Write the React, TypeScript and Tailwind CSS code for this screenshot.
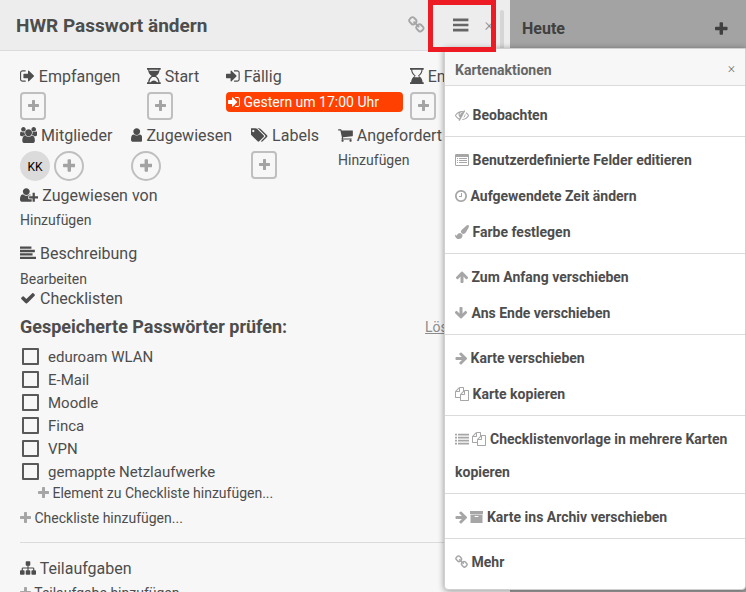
import type { ReactNode } from "react";

const ARROW =
  "M1600 960q0 54-37 91l-651 651q-39 37-91 37-51 0-90-37l-75-75q-38-38-38-91t38-91l293-293h-704q-52 0-84.5-37.5t-32.5-90.5v-128q0-53 32.5-90.5t84.5-37.5h704l-293-294q-38-36-38-90t38-90l75-75q38-38 90-38 53 0 91 38l651 651q37 35 37 90z";

// Each glyph: [left edge, width, path, optional transform] on a 1792 unit high grid.
const GLYPHS: Record<string, [number, number, string, string?]> = {
  plus: [192, 1408, "M1600 736v192q0 40-28 68t-68 28h-416v416q0 40-28 68t-68 28h-192q-40 0-68-28t-28-68v-416h-416q-40 0-68-28t-28-68v-192q0-40 28-68t68-28h416v-416q0-40 28-68t68-28h192q40 0 68 28t28 68v416h416q40 0 68 28t28 68z"],
  signOut: [64, 1664, "M704 1440q0 4 1 20t.5 26.5-3 23.5-10 19.5-20.5 6.5h-320q-119 0-203.5-84.5t-84.5-203.5v-704q0-119 84.5-203.5t203.5-84.5h320q13 0 22.5 9.5t9.5 22.5q0 4 1 20t.5 26.5-3 23.5-10 19.5-20.5 6.5h-320q-66 0-113 47t-47 113v704q0 66 47 113t113 47h312l11.5 1 11.5 3 8 5.5 7 9 2 13.5zm928-544q0 26-19 45l-544 544q-19 19-45 19t-45-19-19-45v-288h-448q-26 0-45-19t-19-45v-384q0-26 19-45t45-19h448v-288q0-26 19-45t45-19 45 19l544 544q19 19 19 45z"],
  signIn: [128, 1536, "M1312 896q0 26-19 45l-544 544q-19 19-45 19t-45-19-19-45v-288h-448q-26 0-45-19t-19-45v-384q0-26 19-45t45-19h448v-288q0-26 19-45t45-19 45 19l544 544q19 19 19 45zm352-352v704q0 119-84.5 203.5t-203.5 84.5h-320q-13 0-22.5-9.5t-9.5-22.5q0-4-1-20t-.5-26.5 3-23.5 10-19.5 20.5-6.5h320q66 0 113-47t47-113v-704q0-66-47-113t-113-47h-312l-11.5-1-11.5-3-8-5.5-7-9-2-13.5q0-4-1-20t-.5-26.5 3-23.5 10-19.5 20.5-6.5h320q119 0 203.5 84.5t84.5 203.5z"],
  link: [64, 1664, "M1520 1216q0-40-28-68l-208-208q-28-28-68-28-42 0-72 32 3 3 19 18.5t21.5 21.5 15 19 13 25.5 3.5 27.5q0 40-28 68t-68 28q-15 0-27.5-3.5t-25.5-13-19-15-21.5-21.5-18.5-19q-33 31-33 73 0 40 28 68l206 207q27 27 68 27 40 0 68-26l147-146q28-28 28-67zm-703-705q0-40-28-68l-206-207q-28-28-68-28-39 0-68 27l-147 146q-28 28-28 67 0 40 28 68l208 208q27 27 68 27 42 0 72-31-3-3-19-18.5t-21.5-21.5-15-19-13-25.5-3.5-27.5q0-40 28-68t68-28q15 0 27.5 3.5t25.5 13 19 15 21.5 21.5 18.5 19q33-31 33-73zm895 705q0 120-85 203l-147 146q-83 83-203 83-121 0-204-85l-206-207q-83-83-83-203 0-123 88-209l-88-88q-86 88-208 88-120 0-204-84l-208-208q-84-84-84-204t85-203l147-146q83-83 203-83 121 0 204 85l206 207q83 83 83 203 0 123-88 209l88 88q86-88 208-88 120 0 204 84l208 208q84 84 84 204z"],
  bars: [128, 1536, "M128 256h1536v256h-1536zM128 768h1536v256h-1536zM128 1280h1536v256h-1536z"],
  clock: [128, 1536, "M1024 544v448q0 14-9 23t-23 9h-320q-14 0-23-9t-9-23v-64q0-14 9-23t23-9h224v-352q0-14 9-23t23-9h64q14 0 23 9t9 23zm416 352q0-148-73-273t-198-198-273-73-273 73-198 198-73 273 73 273 198 198 273 73 273-73 198-198 73-273zm224 0q0 209-103 385.5t-279.5 279.5-385.5 103-385.5-103-279.5-279.5-103-385.5 103-385.5 279.5-279.5 385.5-103 385.5 103 279.5 279.5 103 385.5z"],
  arrowRight: [64, 1536, ARROW],
  arrowUp: [64, 1664, ARROW, "rotate(-90 896 896)"],
  arrowDown: [64, 1664, ARROW, "rotate(90 896 896)"],
  check: [0, 1792, "M1671 566q0 40-28 68l-724 724-136 136q-28 28-68 28t-68-28l-136-136-362-362q-28-28-28-68t28-68l136-136q28-28 68-28t68 28l294 295 656-657q28-28 68-28t68 28l136 136q28 28 28 68z"],
  user: [256, 1280, "M1536 1399q0 109-62.5 187t-150.5 78h-854q-88 0-150.5-78t-62.5-187q0-85 8.5-160.5t31.5-152 58.5-131 94-89 134.5-34.5q131 128 313 128t313-128q76 0 134.5 34.5t94 89 58.5 131 31.5 152 8.5 160.5zm-256-887q0 159-112.5 271.5t-271.5 112.5-271.5-112.5-112.5-271.5 112.5-271.5 271.5-112.5 271.5 112.5 112.5 271.5z"],
  users: [64, 1920, "M657 896q-162 5-265 128h-134q-82 0-138-40.5t-56-118.5q0-353 124-353 6 0 43.5 21t97.5 42.5 119 21.5q67 0 133-23-5 37-5 66 0 155 90 285zm1071 637q0 120-73 189.5t-194 69.5h-874q-121 0-194-69.5t-73-189.5q0-53 3.5-103.5t14-109 26.5-108.5 43-97.5 62-81 85.5-53.5 111.5-20q10 0 43 21.5t73 48 107 48 135 21.5 135-21.5 107-48 73-48 43-21.5q61 0 111.5 20t85.5 53.5 62 81 43 97.5 26.5 108.5 14 109 3.5 103.5zm-1024-1277q0 106-75 181t-181 75-181-75-75-181 75-181 181-75 181 75 75 181zm704 384q0 159-112.5 271.5t-271.5 112.5-271.5-112.5-112.5-271.5 112.5-271.5 271.5-112.5 271.5 112.5 112.5 271.5zm576 225q0 78-56 118.5t-138 40.5h-134q-103-123-265-128 90-130 90-285 0-29-5-66 66 23 133 23 59 0 119-21.5t97.5-42.5 43.5-21q124 0 124 353zm-128-609q0 106-75 181t-181 75-181-75-75-181 75-181 181-75 181 75 75 181z"],
  userPlus: [0, 2048, "M704 896q-159 0-271.5-112.5t-112.5-271.5 112.5-271.5 271.5-112.5 271.5 112.5 112.5 271.5-112.5 271.5-271.5 112.5zm960 128h352q13 0 22.5 9.5t9.5 22.5v192q0 13-9.5 22.5t-22.5 9.5h-352v352q0 13-9.5 22.5t-22.5 9.5h-192q-13 0-22.5-9.5t-9.5-22.5v-352h-352q-13 0-22.5-9.5t-9.5-22.5v-192q0-13 9.5-22.5t22.5-9.5h352v-352q0-13 9.5-22.5t22.5-9.5h192q13 0 22.5 9.5t9.5 22.5v352zm-736 224q0 52 38 90t90 38h256v238q-68 50-171 50h-874q-121 0-194-69t-73-190q0-53 3.5-103.5t14-109 26.5-108.5 43-97.5 62-81 85.5-53.5 111.5-20q19 0 39 17 79 61 154.5 91.5t164.5 30.5 164.5-30.5 154.5-91.5q20-17 39-17 132 0 217 96h-223q-52 0-90 38t-38 90v192z"],
  tags: [0, 1920, "M384 448q0-53-37.5-90.5t-90.5-37.5-90.5 37.5-37.5 90.5 37.5 90.5 90.5 37.5 90.5-37.5 37.5-90.5zm1067 576q0 53-37 90l-491 492q-39 37-91 37-53 0-90-37l-715-716q-38-37-64.5-101t-26.5-117v-416q0-52 38-90t90-38h416q53 0 117 26.5t102 64.5l715 714q37 39 37 91zm384 0q0 53-37 90l-491 492q-39 37-91 37-36 0-59-14t-53-45l470-470q37-37 37-90 0-52-37-91l-715-714q-38-38-102-64.5t-117-26.5h224q53 0 117 26.5t102 64.5l715 714q37 39 37 91z"],
  cart: [64, 1664, "M704 1536q0 52-38 90t-90 38-90-38-38-90 38-90 90-38 90 38 38 90zm896 0q0 52-38 90t-90 38-90-38-38-90 38-90 90-38 90 38 38 90zm128-1088v512q0 24-16.5 42.5t-40.5 21.5l-1044 122q13 60 13 70 0 16-24 64h920q26 0 45 19t19 45-19 45-45 19h-1024q-26 0-45-19t-19-45q0-11 8-31.5t16-36 21.5-40 15.5-29.5l-177-823h-204q-26 0-45-19t-19-45 19-45 45-19h256q16 0 28.5 6.5t19.5 15.5 13 24.5 8 26 5.5 29.5 4.5 26h1201q26 0 45 19t19 45z"],
  alignLeft: [0, 1792, "M0 160h1280v256h-1280zM0 544h1664v256h-1664zM0 928h1408v256h-1408zM0 1312h1792v256h-1792z"],
  sitemap: [0, 1792, "M1792 1248v320q0 40-28 68t-68 28h-320q-40 0-68-28t-28-68v-320q0-40 28-68t68-28h96v-192h-512v192h96q40 0 68 28t28 68v320q0 40-28 68t-68 28h-320q-40 0-68-28t-28-68v-320q0-40 28-68t68-28h96v-192h-512v192h96q40 0 68 28t28 68v320q0 40-28 68t-68 28h-320q-40 0-68-28t-28-68v-320q0-40 28-68t68-28h96v-192q0-52 38-90t90-38h512v-192h-96q-40 0-68-28t-28-68v-320q0-40 28-68t68-28h320q40 0 68 28t28 68v320q0 40-28 68t-68 28h-96v192h512q52 0 90 38t38 90v192h96q40 0 68 28t28 68z"],
  hourglassStart: [128, 1536, "M128 0h1536v192h-128q0 420-400 704 400 284 400 704h128v192h-1536v-192h128q0-420 400-704-400-284-400-704h-128zM384 192q0 64 12 120h1000q12-56 12-120zM1408 1600q0-360-330-600h-364q-330 240-330 600h152q120-190 360-190t360 190z"],
  hourglassEnd: [128, 1536, "M128 0h1536v192h-128q0 420-400 704 400 284 400 704h128v192h-1536v-192h128q0-420 400-704-400-284-400-704h-128zM384 192q0 380 370 640-15 60-60 120-20 30-60 90h524q-40-60-60-90-45-60-60-120 370-260 370-640z"],
  files: [0, 1792, "M1696 384q40 0 68 28t28 68v1216q0 40-28 68t-68 28h-960q-40 0-68-28t-28-68v-288h-544q-40 0-68-28t-28-68v-672q0-40 20-88t48-76l408-408q28-28 76-48t88-20h416q40 0 68 28t28 68v328q68-40 128-40h416zm-544 213l-299 299h299v-299zm-640-384l-299 299h299v-299zm196 647l316-316v-416h-384v416q0 40-28 68t-68 28h-416v640h512v-256q0-40 20-88t48-76zm956 804v-1152h-384v416q0 40-28 68t-68 28h-416v640h896z"],
  list: [0, 1792, "M0 224h256v224h-256zM0 608h256v224h-256zM0 992h256v224h-256zM0 1376h256v224h-256zM384 224h1408v224h-1408zM384 608h1408v224h-1408zM384 992h1408v224h-1408zM384 1376h1408v224h-1408z"],
  listAlt: [0, 1792, "M160 128h1472q160 0 160 160v1216q0 160-160 160h-1472q-160 0-160-160v-1216q0-160 160-160zM128 512v992q0 32 32 32h1472q32 0 32-32v-992zM256 640h128v128h-128zM512 640h1024v128h-1024zM256 896h128v128h-128zM512 896h1024v128h-1024zM256 1152h128v128h-128zM512 1152h1024v128h-1024z"],
  archive: [64, 1664, "M64 128h1664v384h-1664zM128 576h1536v1088h-1536zM704 768q-64 0-64 64t64 64h384q64 0 64-64t-64-64z"],
  brush: [0, 1792, "M1615 0q70 0 122.5 46.5t52.5 116.5q0 63-45 151-332 629-465 752-97 91-218 91-126 0-216.5-92.5t-90.5-219.5q0-128 92-212l638-579q59-54 130-54zm-909 1034q39 76 106.5 130t150.5 76l1 71q4 213-129.5 347t-348.5 134q-123 0-218-46.5t-152.5-127.5-86.5-183-29-220q7 5 41 30t62 44.5 59 36.5 46 17q41 0 55-37 25-66 57.5-112.5t69.5-76 88-47.5 103-25.5 125-10.5z"],
  eyeSlash: [0, 1792, "M555 1335l78-141q-87-63-136-159t-49-203q0-121 61-225-229 117-381 353 167 258 427 375zm389-759q0-20-14-34t-34-14q-125 0-214.5 89.5t-89.5 214.5q0 20 14 34t34 14 34-14 14-34q0-86 61-147t147-61q20 0 34-14t14-34zm363-191q0 7-1 9-106 189-316 567t-315 566l-49 89q-10 16-28 16-12 0-134-70-16-10-16-28 0-12 44-87-143-65-263.5-173t-208.5-245q-20-31-20-69t20-69q153-235 380-371t496-136q89 0 180 17l54-97q10-16 28-16 5 0 18 6t31 15.5 33 18.5 31.5 18.5 19.5 11.5q16 10 16 27zm37 447q0 139-79 253.5t-209 164.5l280-502q8 45 8 84zm448 128q0 35-20 69-39 64-109 145-150 172-347.5 267t-419.5 95l74-132q212-18 392.5-137t301.5-307q-115-179-282-294l63-112q95 64 182.5 153t144.5 184q20 34 20 69z"],
};

function Icon({ name, className = "h-4" }: { name: string; className?: string }) {
  const [x, w, d, transform] = GLYPHS[name];
  return (
    <svg
      aria-hidden="true"
      viewBox={`${x} 0 ${w} 1792`}
      fill="currentColor"
      fillRule="evenodd"
      className={`inline-block w-auto shrink-0 align-[-2px] ${className}`}
    >
      <path d={d} transform={transform} />
    </svg>
  );
}

function Label({ icon, children }: { icon: string; children: ReactNode }) {
  return (
    <h3 className="text-base leading-5 whitespace-nowrap">
      <Icon name={icon} /> {children}
    </h3>
  );
}

function Field({ icon, label, width, children }: { icon: string; label: string; width: string; children: ReactNode }) {
  return (
    <div className={`shrink-0 ${width}`}>
      <Label icon={icon}>{label}</Label>
      <div className="mt-[5px] flex gap-1">{children}</div>
    </div>
  );
}

function AddBox({ label }: { label: string }) {
  return (
    <button aria-label={label} className="flex h-7 w-[26px] items-center justify-center rounded border-2 border-[#bfbfbf] text-[#a3a3a3]">
      <Icon name="plus" className="h-3.5" />
    </button>
  );
}

function AddCircle({ label }: { label: string }) {
  return (
    <button aria-label={label} className="flex size-[30px] items-center justify-center rounded-full border-2 border-[#bfbfbf] text-[#a3a3a3]">
      <Icon name="plus" className="h-4" />
    </button>
  );
}

const CHECKS = ["eduroam WLAN", "E-Mail", "Moodle", "Finca", "VPN", "gemappte Netzlaufwerke"];

const MENU: { icons: string[]; text: string }[][] = [
  [{ icons: ["eyeSlash"], text: "Beobachten" }],
  [
    { icons: ["listAlt"], text: "Benutzerdefinierte Felder editieren" },
    { icons: ["clock"], text: "Aufgewendete Zeit ändern" },
    { icons: ["brush"], text: "Farbe festlegen" },
  ],
  [
    { icons: ["arrowUp"], text: "Zum Anfang verschieben" },
    { icons: ["arrowDown"], text: "Ans Ende verschieben" },
  ],
  [
    { icons: ["arrowRight"], text: "Karte verschieben" },
    { icons: ["files"], text: "Karte kopieren" },
  ],
  [{ icons: ["list", "files"], text: "Checklistenvorlage in mehrere Karten kopieren" }],
  [{ icons: ["arrowRight", "archive"], text: "Karte ins Archiv verschieben" }],
  [{ icons: ["link"], text: "Mehr" }],
];

function CardMenu() {
  return (
    <div className="absolute top-12 right-0 w-[302px] rounded-b border border-[#d0d0d0] bg-white pb-1.5 shadow-[0_1px_6px_rgba(0,0,0,0.4)]">
      <div className="flex h-[37px] items-center justify-between border-b border-[#dbdbdb] bg-[#f7f7f7] px-2.5 pt-1.5">
        <h2 className="text-sm font-bold text-[#666]">Kartenaktionen</h2>
        <button aria-label="Schließen" className="pb-1 text-sm leading-5 font-light text-[#737373]">×</button>
      </div>
      <ul className="text-sm leading-[33px] font-bold">
        {MENU.map((group, i) => (
          <li key={i} className="border-b border-[#dbdbdb] pt-[7px] pb-1 first:pt-[13px] last:border-0">
            <ul className="flex flex-col gap-[3px] px-2.5">
              {group.map((item) => (
                <li key={item.text}>
                  <button className="block w-full text-left">
                    {item.icons.map((icon) => (
                      <span key={icon} className="text-[#a6a6a6]">
                        <Icon name={icon} className="h-3.5" />{" "}
                      </span>
                    ))}
                    {item.text}
                  </button>
                </li>
              ))}
            </ul>
          </li>
        ))}
      </ul>
    </div>
  );
}

export default function App() {
  return (
    <div className="relative flex h-screen overflow-hidden bg-[#f7f7f7] font-[Roboto,sans-serif] text-[#4d4d4d]">
      <main className="min-w-0 flex-1 overflow-hidden">
        <header className="flex h-[51px] items-center border-b border-[#dbdbdb] bg-[#ededed] pl-4">
          <h1 className="flex-1 pt-0.5 text-[19px] font-bold">HWR Passwort ändern</h1>
          <button aria-label="Link kopieren" className="mr-7 flex text-[#a6a6a6]">
            <Icon name="link" className="h-[18px]" />
          </button>
          <button aria-label="Kartenaktionen" className="mr-4 flex text-[#666]">
            <Icon name="bars" className="h-[18px]" />
          </button>
          <button aria-label="Schließen" className="mr-1.5 text-lg leading-5 font-light text-[#8c8c8c]">×</button>
          <div className="mr-1.5 h-10 w-1 self-end rounded-t bg-[#d6d6d6]" />
        </header>

        <div className="px-5 pt-4 text-sm leading-5">
          <div className="flex">
            <Field icon="signOut" label="Empfangen" width="w-[127px]"><AddBox label="Empfangen hinzufügen" /></Field>
            <Field icon="hourglassStart" label="Start" width="w-[79px]"><AddBox label="Start hinzufügen" /></Field>
            <Field icon="signIn" label="Fällig" width="w-[184px]">
              <button className="h-5 w-[177px] rounded bg-[#ff4000] px-0.5 text-left whitespace-nowrap text-white">
                <Icon name="signIn" className="h-3.5" /> Gestern um 17:00 Uhr
              </button>
            </Field>
            <Field icon="hourglassEnd" label="Ende" width="w-[79px]"><AddBox label="Ende hinzufügen" /></Field>
          </div>
          <div className="mt-1.5 flex">
            <Field icon="users" label="Mitglieder" width="w-[111px]">
              <span className="flex size-[30px] items-center justify-center rounded-full bg-[#dbdbdb] pt-0.5 text-xs text-black">KK</span>
              <AddCircle label="Mitglied hinzufügen" />
            </Field>
            <Field icon="user" label="Zugewiesen" width="w-[120px]"><AddCircle label="Zugewiesen hinzufügen" /></Field>
            <Field icon="tags" label="Labels" width="w-[87px]"><AddBox label="Label hinzufügen" /></Field>
            <div className="shrink-0">
              <Label icon="cart">Angefordert</Label>
              <button className="mt-1">Hinzufügen</button>
            </div>
          </div>
          <div className="mt-[5px]">
            <Label icon="userPlus">Zugewiesen von</Label>
            <button className="mt-1 block">Hinzufügen</button>
          </div>
          <div className="mt-3.5">
            <Label icon="alignLeft">Beschreibung</Label>
            <button className="mt-[5px] block">Bearbeiten</button>
          </div>
          <Label icon="check">Checklisten</Label>
          <div className="mt-1.5 flex items-center justify-between">
            <h2 className="text-lg leading-6 font-bold">Gespeicherte Passwörter prüfen:</h2>
            <button className="mr-3 text-[#8c8c8c] underline">Löschen</button>
          </div>
          <ul className="mt-1.5 pl-0.5 text-[15px]">
            {CHECKS.map((text) => (
              <li key={text}>
                <label className="flex h-[23px] items-center gap-[9px]">
                  <input type="checkbox" className="size-[17px] appearance-none rounded-[1px] border-2 border-[#595959]" />
                  {text}
                </label>
              </li>
            ))}
          </ul>
          <button className="ml-[18px] block">
            <span className="text-[#a6a6a6]"><Icon name="plus" className="h-3.5" /></span> Element zu Checkliste hinzufügen...
          </button>
          <button className="mt-[5px] block">
            <span className="text-[#a6a6a6]"><Icon name="plus" className="h-3.5" /></span> Checkliste hinzufügen...
          </button>
          <hr className="mt-3.5 mb-4 border-[#dbdbdb]" />
          <Label icon="sitemap">Teilaufgaben</Label>
          <button className="mt-1 block">
            <span className="text-[#a6a6a6]"><Icon name="plus" className="h-3.5" /></span> Teilaufgabe hinzufügen...
          </button>
        </div>
      </main>

      <aside className="w-[236px] shrink-0 bg-[#a3a3a3] text-[#404040]">
        <div className="flex h-[58px] items-center justify-between pr-[18px] pl-3">
          <h2 className="text-base font-bold">Heute</h2>
          <button aria-label="Karte hinzufügen" className="flex"><Icon name="plus" className="h-4" /></button>
        </div>
      </aside>

      <CardMenu />
      <div className="pointer-events-none absolute top-0 right-[250px] h-[52px] w-[68px] border-5 border-[#ed1c24]" />
    </div>
  );
}
